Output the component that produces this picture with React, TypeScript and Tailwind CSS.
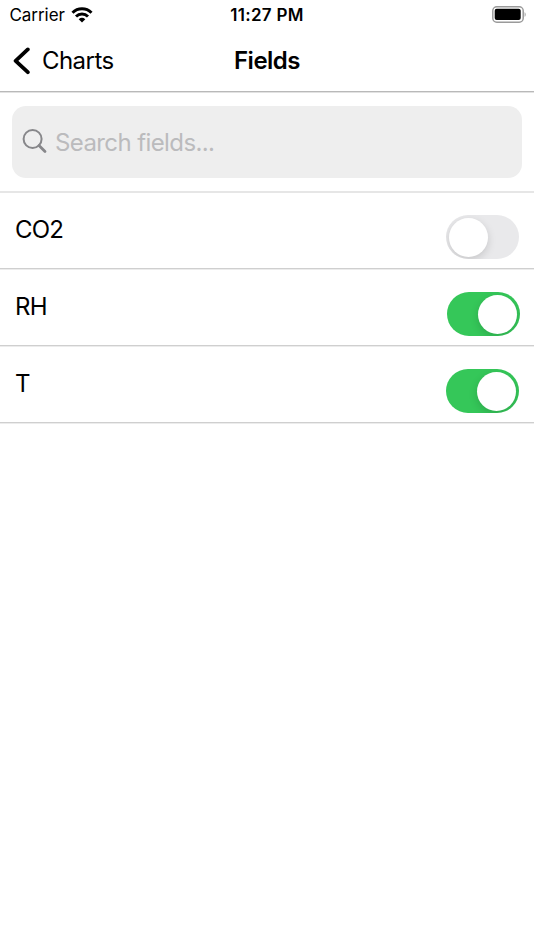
import clsx from "clsx";

const FIELDS = [
  { name: "CO2", enabled: false },
  { name: "RH", enabled: true, offset: true },
  { name: "T", enabled: true },
];

function WifiIcon() {
  return (
    <svg width="22" height="16" viewBox="0 0 22 16" fill="none" stroke="#000" strokeWidth="3">
      <path d="M1.5 5.7a13.6 13.6 0 0 1 19 0" />
      <path d="M5 9.5a8.6 8.6 0 0 1 12 0" />
      <path d="M7.7 12.3a5 5 0 0 1 6.6 0L11 15.6Z" fill="#000" stroke="none" />
    </svg>
  );
}

function BatteryIcon() {
  return (
    <svg width="35" height="18" viewBox="0 0 35 18">
      <rect x="0.8" y="0.8" width="30.4" height="15.4" rx="4" fill="#fff" stroke="#9a9a9a" strokeWidth="1.5" />
      <rect x="2.7" y="2.8" width="26" height="11.2" rx="2" fill="#000" />
      <path d="M32.6 6.2c1.4.6 1.4 4 0 4.6Z" fill="#9a9a9a" />
    </svg>
  );
}

function StatusBar() {
  return (
    <div className="grid h-[30px] grid-cols-3 items-center text-[17px] leading-[30px]">
      <div className="flex items-center gap-[6px] pl-[9.5px]">
        <span className="tracking-[-0.05px]">Carrier</span>
        <WifiIcon />
      </div>
      <span className="text-center font-semibold tracking-[0.3px]">11:27 PM</span>
      <div className="flex justify-end pr-[7px]">
        <BatteryIcon />
      </div>
    </div>
  );
}

function NavBar() {
  return (
    <header className="border-b border-[#e2e2e2]">
      <div className="grid h-[62px] grid-cols-3 items-center border-b border-[#b9b9b9] text-2xl">
        <button className="flex items-center gap-3 pl-[13px]">
          <svg width="17" height="28" viewBox="0 0 17 28" fill="none">
            <path d="M14.8 2.4 2.6 13.8 14.8 25.2" stroke="#000" strokeWidth="3.8" strokeLinecap="round" strokeLinejoin="round" />
          </svg>
          <span className="tracking-[-0.55px]">Charts</span>
        </button>
        <h1 className="text-center font-semibold tracking-[-0.5px]">Fields</h1>
      </div>
    </header>
  );
}

function SearchBar() {
  return (
    <div className="border-b-2 border-[#e6e6e6] px-3 py-[13px]">
      <div className="flex h-[72px] items-center gap-[7px] rounded-[14px] bg-[#eeeeee] pl-[10px]">
        <svg width="26" height="26" viewBox="0 0 26 26" fill="none" stroke="#87878a" className="mb-[2px]">
          <circle cx="10.6" cy="11" r="9" strokeWidth="2" />
          <path d="m17 17.5 6 6" strokeWidth="2.8" strokeLinecap="round" />
        </svg>
        <span className="pt-px text-2xl tracking-[-0.6px] text-[#bbbbbd]">Search fields...</span>
      </div>
    </div>
  );
}

function Toggle({ on }: { on: boolean }) {
  return (
    <span
      role="switch"
      aria-checked={on}
      className={clsx("flex h-11 w-[73px] items-center overflow-hidden rounded-full px-[3px]", on ? "justify-end bg-[#35c759]" : "bg-[#e9e9eb]")}
    >
      <span className="size-[39px] rounded-full bg-white shadow-[0_3px_8px_rgba(0,0,0,0.15)]" />
    </span>
  );
}

export default function App() {
  return (
    <div className="min-h-[950px] w-full bg-white font-['Inter','Liberation_Sans',sans-serif] text-black">
      <StatusBar />
      <NavBar />
      <SearchBar />
      <ul>
        {FIELDS.map((field) => (
          <li key={field.name} className="border-b border-[#ececec]">
            <div
              className={clsx("flex h-[76px] items-start justify-between border-b border-[#cfcfcf] pl-[15px]", field.offset ? "pr-[14px]" : "pr-[15px]")}
            >
              <span className="pt-[21px] text-2xl leading-8 tracking-[-0.8px]">{field.name}</span>
              <span className="pt-[22px]">
                <Toggle on={field.enabled} />
              </span>
            </div>
          </li>
        ))}
      </ul>
    </div>
  );
}
